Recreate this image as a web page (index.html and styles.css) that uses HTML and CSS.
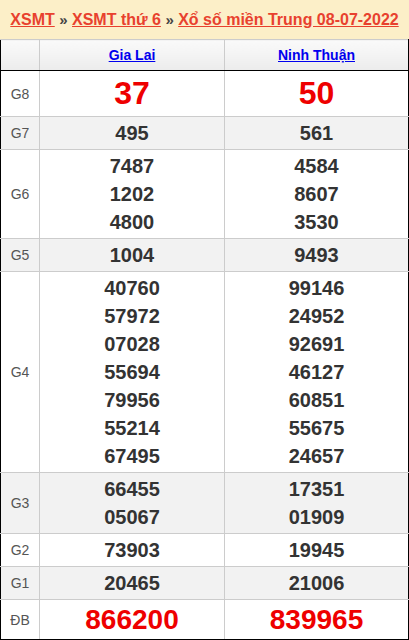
FILE: index.html
```html
<!DOCTYPE html>
<html lang="vi">
<head>
<meta charset="utf-8">
<link rel="stylesheet" href="styles.css">
</head>
<body>
<div class="title">
  <a href="#">XSMT</a> <span class="sep">»</span> <a href="#">XSMT thứ 6</a> <span class="sep">»</span> <a href="#">Xổ số miền Trung 08-07-2022</a>
</div>
<table class="kq">
  <colgroup><col class="c-lbl"><col class="c-a"><col class="c-b"></colgroup>
  <thead>
    <tr class="head"><th></th><th><a href="#">Gia Lai</a></th><th><a href="#">Ninh Thuận</a></th></tr>
  </thead>
  <tbody>
    <tr class="g8"><td class="lbl">G8</td><td><div class="n big">37</div></td><td><div class="n big">50</div></td></tr>
    <tr class="alt"><td class="lbl">G7</td><td><div class="n">495</div></td><td><div class="n">561</div></td></tr>
    <tr><td class="lbl">G6</td><td><div class="n">7487</div><div class="n">1202</div><div class="n">4800</div></td><td><div class="n">4584</div><div class="n">8607</div><div class="n">3530</div></td></tr>
    <tr class="alt"><td class="lbl">G5</td><td><div class="n">1004</div></td><td><div class="n">9493</div></td></tr>
    <tr><td class="lbl">G4</td>
      <td><div class="n">40760</div><div class="n">57972</div><div class="n">07028</div><div class="n">55694</div><div class="n">79956</div><div class="n">55214</div><div class="n">67495</div></td>
      <td><div class="n">99146</div><div class="n">24952</div><div class="n">92691</div><div class="n">46127</div><div class="n">60851</div><div class="n">55675</div><div class="n">24657</div></td></tr>
    <tr class="alt"><td class="lbl">G3</td><td><div class="n">66455</div><div class="n">05067</div></td><td><div class="n">17351</div><div class="n">01909</div></td></tr>
    <tr><td class="lbl">G2</td><td><div class="n">73903</div></td><td><div class="n">19945</div></td></tr>
    <tr class="alt"><td class="lbl">G1</td><td><div class="n">20465</div></td><td><div class="n">21006</div></td></tr>
    <tr class="db"><td class="lbl">ĐB</td><td><div class="n jack">866200</div></td><td><div class="n jack">839965</div></td></tr>
  </tbody>
</table>
</body>
</html>
```
FILE: styles.css
```css
html, body {
  margin: 0;
  padding: 0;
  background: #fff;
  font-family: "Liberation Sans", Arial, sans-serif;
}
.title {
  height: 39px;
  background: #fcefc8;
  text-align: center;
  font-size: 16px;
  font-weight: bold;
  line-height: 40px;
  color: #333;
  white-space: nowrap;
}
.title a {
  color: #e8412e;
  text-decoration: underline;
}
.title .sep {
  color: #444;
  font-size: 15px;
}
.kq {
  width: 409px;
  border-collapse: collapse;
  table-layout: fixed;
  border: 1px solid #000;
  border-top: 1px solid #ddd;
}
.c-lbl { width: 39px; }
.c-a { width: 185px; }
.kq th, .kq td {
  border: 1px solid #ccc;
  text-align: center;
  vertical-align: middle;
  padding: 2px 0;
}
.kq tr > :first-child { border-left: 1px solid #000; }
.kq tr > :last-child { border-right: 1px solid #000; }
.kq tr:last-child > * { border-bottom: 1px solid #000; }
.head th {
  height: 26px;
  padding: 2px 0;
  background: linear-gradient(#fafafa, #ececec);
  font-size: 14px;
  font-weight: bold;
}
.head a {
  color: #0000ee;
  text-decoration: underline;
}
.lbl {
  font-size: 14px;
  color: #555;
}
.alt td { background: #f2f2f2; }
.n {
  font-size: 20px;
  font-weight: bold;
  line-height: 28px;
  color: #333;
}
.n.big {
  font-size: 32px;
  line-height: 41px;
  color: #ee0000;
}
.n.jack {
  font-size: 28px;
  line-height: 35px;
  color: #ee0000;
}
```
